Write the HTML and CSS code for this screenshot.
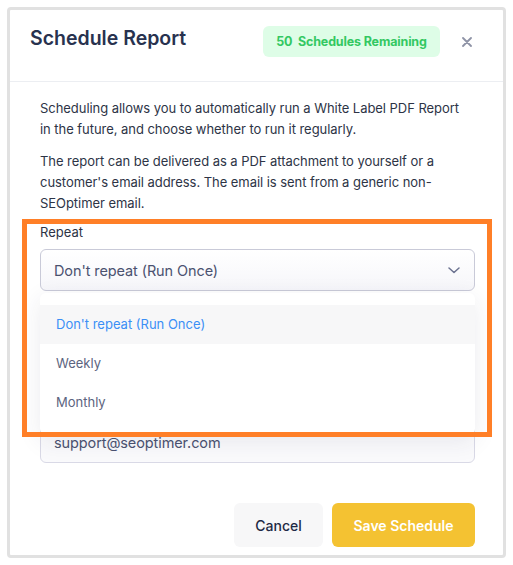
FILE: index.html
```html
<!DOCTYPE html>
<html>
<head>
<meta charset="utf-8">
<link rel="stylesheet" href="styles.css">
</head>
<body>
<div class="modal">
  <div class="header">
    <h1 class="title">Schedule Report</h1>
    <span class="badge">50&nbsp; Schedules Remaining</span>
    <button class="close" aria-label="Close">
      <svg width="10" height="10" viewBox="0 0 10 10"><path d="M1 1L9 9M9 1L1 9" stroke="#8e93a6" stroke-width="1.8" stroke-linecap="round"/></svg>
    </button>
  </div>
  <div class="body">
    <p class="text">Scheduling allows you to automatically run a White Label PDF Report in the future, and choose whether to run it regularly.</p>
    <p class="text last">The report can be delivered as a PDF attachment to yourself or a customer's email address. The email is sent from a generic non-SEOptimer email.</p>
    <div class="group">
      <label class="label">Repeat</label>
      <div class="select-wrap">
        <div class="select">
          <span>Don't repeat (Run Once)</span>
          <svg width="12" height="7" viewBox="0 0 12 7"><path d="M1 1L6 5.5L11 1" fill="none" stroke="#6b7290" stroke-width="1.5" stroke-linecap="round" stroke-linejoin="round"/></svg>
        </div>
        <ul class="menu">
          <li class="option active">Don't repeat (Run Once)</li>
          <li class="option">Weekly</li>
          <li class="option">Monthly</li>
        </ul>
      </div>
    </div>
    <div class="group second">
      <div class="input">support@seoptimer.com</div>
    </div>
  </div>
  <div class="footer">
    <button class="btn cancel">Cancel</button>
    <button class="btn save">Save Schedule</button>
  </div>
</div>
<div class="highlight"></div>
</body>
</html>
```

FILE: styles.css
```css
* { box-sizing: border-box; }
html, body { margin: 0; padding: 0; background: #ffffff; }
body {
  font-family: Inter, "Noto Sans", sans-serif;
  color: #2d3446;
  padding: 7px 0 0 7px;
}
.modal {
  width: 499px;
  border: 3px solid #e1e1e1;
  border-radius: 4px;
  background: #fff;
}
.header {
  height: 72px;
  display: flex;
  align-items: flex-start;
  padding: 16px 31px 0 20px;
  border-bottom: 1px solid #eceef2;
}
.title {
  margin: 0;
  font-size: 19.5px;
  line-height: 24px;
  font-weight: 600;
  color: #28324f;
}
.badge {
  margin-left: auto;
  height: 31px;
  line-height: 31px;
  width: 177px;
  text-align: center;
  border-radius: 6px;
  background: #defde7;
  color: #33c862;
  font-size: 12.5px;
  letter-spacing: -0.15px;
  font-weight: 700;
}
.close {
  margin-left: 22px;
  margin-top: 11px;
  padding: 0;
  border: 0;
  background: none;
  width: 10px;
  height: 10px;
  display: flex;
}
.body {
  padding: 16px 28px 0 30px;
}
.text {
  margin: 0 0 11px;
  max-width: 428px;
  font-size: 13px;
  letter-spacing: -0.05px;
  line-height: 21px;
  color: #2d3446;
}
.text.last { margin-bottom: 8px; }
.label {
  display: block;
  font-size: 13px;
  line-height: 21px;
  margin-bottom: 6px;
  color: #2d3446;
}
.select-wrap { position: relative; }
.select {
  height: 42px;
  border: 1px solid #c9cad8;
  border-radius: 6px;
  background: linear-gradient(#ffffff, #f6f6fa);
  display: flex;
  align-items: center;
  justify-content: space-between;
  padding: 0 14px 0 13px;
  font-size: 14.5px;
  letter-spacing: -0.1px;
  color: #4b5270;
}
.menu {
  position: absolute;
  z-index: 2;
  top: 44px;
  left: 0;
  right: 0;
  margin: 0;
  list-style: none;
  padding: 12px 0 13px;
  background: #fff;
  border-radius: 6px;
  box-shadow: 0 6px 24px rgba(40, 45, 80, 0.09);
}
.option {
  height: 39px;
  line-height: 39px;
  padding-left: 16px;
  font-size: 13px;
  color: #5c6480;
}
.option.active {
  background: #f7f7f8;
  color: #3b8ff6;
}
.group.second { margin-top: 130px; }
.input {
  height: 42px;
  border: 1px solid #d9d9e6;
  border-radius: 6px;
  background: #fafafc;
  display: flex;
  align-items: center;
  padding-left: 13px;
  font-size: 14.5px;
  letter-spacing: -0.1px;
  color: #4b5270;
}
.footer {
  display: flex;
  justify-content: flex-end;
  gap: 9px;
  padding: 40px 28px 8px 0;
}
.btn {
  height: 44px;
  border: 0;
  border-radius: 6px;
  font-family: Inter, "Noto Sans", sans-serif;
  font-size: 14px;
  cursor: pointer;
}
.cancel {
  width: 89px;
  background: #f7f7f8;
  color: #1e2a45;
  font-weight: 500;
}
.save {
  width: 143px;
  background: #f4c232;
  color: #ffffff;
  font-weight: 600;
}
.highlight {
  position: absolute;
  z-index: 5;
  left: 22px;
  top: 219px;
  width: 470px;
  height: 218px;
  border: 5px solid #ff7f27;
  pointer-events: none;
}
```
